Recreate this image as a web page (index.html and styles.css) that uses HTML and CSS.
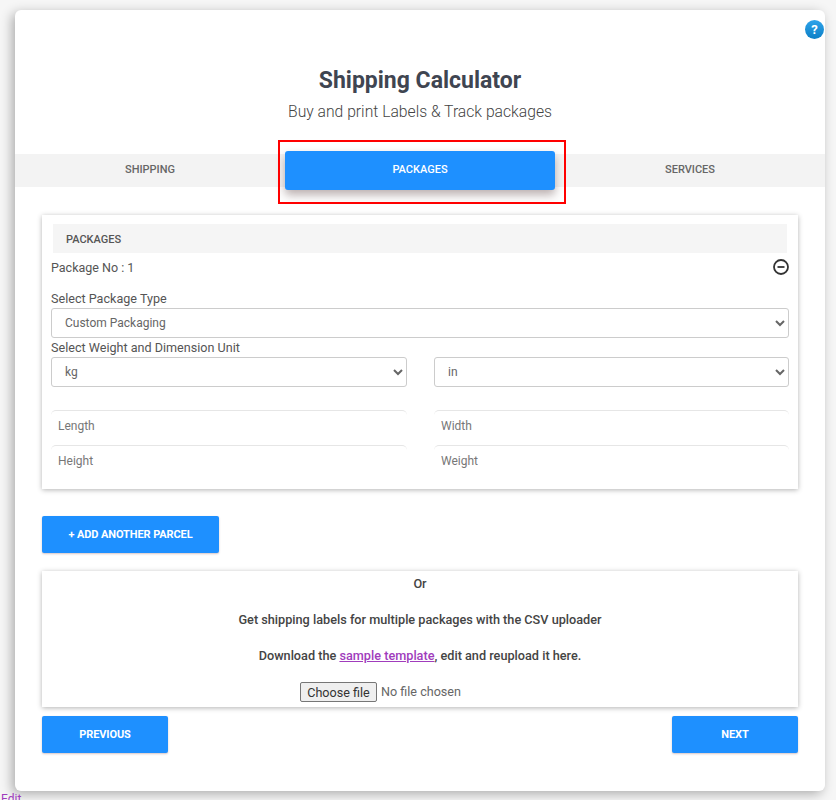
FILE: index.html
```html
<!DOCTYPE html>
<html lang="en">

<head>
    <meta charset="UTF-8">
    <meta name="viewport" content="width=device-width, initial-scale=1.0">
    <title>Shipping Calculator</title>
    <link rel="stylesheet" href="styles.css">
</head>

<body>
    <div class="calculator">
        <a class="help" href="#">?</a>

        <div class="heading">
            <h1>Shipping Calculator</h1>
            <p>Buy and print Labels &amp; Track packages</p>
        </div>

        <div class="tabs">
            <div class="tab">SHIPPING</div>
            <div class="tab active">PACKAGES</div>
            <div class="tab">SERVICES</div>
            <div class="red-box"></div>
        </div>

        <div class="content">
            <div class="panel packages">
                <div class="panel-title">PACKAGES</div>
                <div class="package-row">
                    <span>Package No : 1</span>
                    <svg class="remove" width="18" height="18" viewBox="0 0 18 18">
                        <circle cx="9" cy="9" r="7" fill="none" stroke="#333" stroke-width="1.8" />
                        <path d="M5.5 9h7" stroke="#333" stroke-width="1.8" />
                    </svg>
                </div>
                <label class="first-label">Select Package Type</label>
                <select class="field wide">
                    <option>Custom Packaging</option>
                </select>
                <label class="unit-label">Select Weight and Dimension Unit</label>
                <div class="two-col">
                    <select class="field">
                        <option>kg</option>
                    </select>
                    <select class="field">
                        <option>in</option>
                    </select>
                </div>
                <div class="two-col inputs">
                    <input type="text" placeholder="Length">
                    <input type="text" placeholder="Width">
                    <input type="text" placeholder="Height">
                    <input type="text" placeholder="Weight">
                </div>
            </div>

            <button class="btn add-btn">+ ADD ANOTHER PARCEL</button>

            <div class="panel uploader">
                <p class="or">Or</p>
                <p>Get shipping labels for multiple packages with the CSV uploader</p>
                <p>Download the <a href="#">sample template</a>, edit and reupload it here.</p>
                <div class="file-row">
                    <button class="file-btn">Choose file</button>
                    <span>No file chosen</span>
                </div>
            </div>

            <div class="nav-btns">
                <button class="btn step-btn">PREVIOUS</button>
                <button class="btn step-btn">NEXT</button>
            </div>
        </div>
    </div>

    <a class="edit" href="#">Edit</a>
</body>

</html>
```
FILE: styles.css
```css
* {
    margin: 0;
    box-sizing: border-box;
}

html,
body {
    height: 800px;
    overflow: hidden;
}

body {
    background-color: #f6f6f6;
    color: #444;
    font-family: Roboto, "Liberation Sans", sans-serif;
    padding: 10px 11px 0 15px;
    position: relative;
}

.calculator {
    position: relative;
    height: 781px;
    background-color: #fff;
    border-radius: 6px;
    box-shadow: -3px 3px 12px rgba(0, 0, 0, 0.3);
}

.help {
    position: absolute;
    top: 10px;
    right: 1px;
    width: 19px;
    height: 19px;
    border-radius: 50%;
    background: linear-gradient(#2ea3ea, #0c7fc6);
    color: #fff;
    font-size: 13px;
    font-weight: 700;
    line-height: 19px;
    text-align: center;
    text-decoration: none;
}

.heading {
    height: 144px;
    padding-top: 56px;
    text-align: center;
}

.heading h1 {
    font-size: 23px;
    font-weight: 700;
    line-height: 30px;
    color: #3f4551;
}

.heading p {
    font-size: 15.7px;
    font-weight: 300;
    line-height: 20px;
    margin-top: 6px;
    color: #444;
}

.tabs {
    position: relative;
    display: grid;
    grid-template-columns: 270px 270px 270px;
    height: 33px;
    background-color: #f3f3f3;
}

.tab {
    font-size: 11px;
    font-weight: 500;
    line-height: 32px;
    text-align: center;
    color: #666;
}

.tab.active {
    height: 39px;
    margin-top: -3px;
    line-height: 37px;
    background-color: #1e90ff;
    color: #fff;
    border-radius: 3px;
    box-shadow: 0 5px 10px rgba(60, 30, 30, 0.35);
}

.red-box {
    position: absolute;
    top: -14px;
    left: 263px;
    width: 288px;
    height: 64px;
    border: 2px solid #f00;
}

.content {
    padding: 28px 27px 0;
}

.panel {
    background-color: #fff;
    box-shadow: 0 1px 5px rgba(0, 0, 0, 0.3);
}

.packages {
    height: 274px;
    padding: 9px 9px 0;
}

.panel-title {
    margin: 0 2px;
    height: 29px;
    padding-left: 13px;
    background-color: #f5f5f5;
    font-size: 11px;
    font-weight: 500;
    line-height: 31px;
    color: #555;
}

.package-row {
    display: flex;
    justify-content: space-between;
    align-items: center;
    height: 28px;
    font-size: 12.5px;
    color: #555;
}

.remove {
    margin-right: -1px;
}

label {
    display: block;
    font-size: 12.6px;
    line-height: 18px;
    color: #555;
}

.first-label {
    margin-top: 9px;
}

.unit-label {
    margin-top: 1px;
}

.field {
    width: 100%;
    height: 30px;
    padding-left: 9px;
    background-color: #fff;
    border: 1px solid #ccc;
    border-radius: 3px;
    font-family: inherit;
    font-size: 12px;
    color: #666;
}

.wide {
    display: block;
}

.two-col {
    display: grid;
    grid-template-columns: 356px 355px;
    gap: 0 27px;
}

.inputs {
    margin-top: 23px;
}

.inputs input {
    height: 35px;
    padding: 0 7px 4px;
    border: 0;
    border-top: 1px solid #e6e6e6;
    border-radius: 5px 5px 0 0;
    font-family: inherit;
    font-size: 12px;
    outline: none;
}

.inputs input::placeholder {
    color: #777;
}

.btn {
    display: block;
    border: none;
    border-radius: 2px;
    background-color: #1e90ff;
    color: #fff;
    font-family: inherit;
    font-size: 11px;
    font-weight: 700;
    letter-spacing: -0.1px;
    cursor: pointer;
    box-shadow: 0 1px 2px rgba(120, 60, 60, 0.3);
}

.add-btn {
    width: 177px;
    height: 37px;
    margin-top: 27px;
}

.uploader {
    height: 136px;
    margin-top: 18px;
    text-align: center;
    font-size: 12.7px;
    font-weight: 500;
    line-height: 14px;
    color: #444;
}

.uploader p {
    padding-top: 22px;
}

.uploader .or {
    padding-top: 6px;
}

.uploader a {
    color: #a03cbc;
}

.file-row {
    display: flex;
    align-items: center;
    gap: 4px;
    margin: 19px 0 0 258px;
    font-size: 12.6px;
    font-weight: 400;
    color: #666;
}

.file-btn {
    width: 77px;
    height: 20px;
    padding: 0;
    background-color: #efefef;
    border: 1px solid #767676;
    border-radius: 2px;
    font-family: inherit;
    font-size: 12.6px;
    color: #333;
}

.nav-btns {
    display: flex;
    justify-content: space-between;
    margin-top: 9px;
}

.step-btn {
    width: 126px;
    height: 37px;
}

.edit {
    position: absolute;
    top: 792px;
    left: 1px;
    font-size: 12px;
    color: #a03cbc;
    text-decoration: none;
}
```
